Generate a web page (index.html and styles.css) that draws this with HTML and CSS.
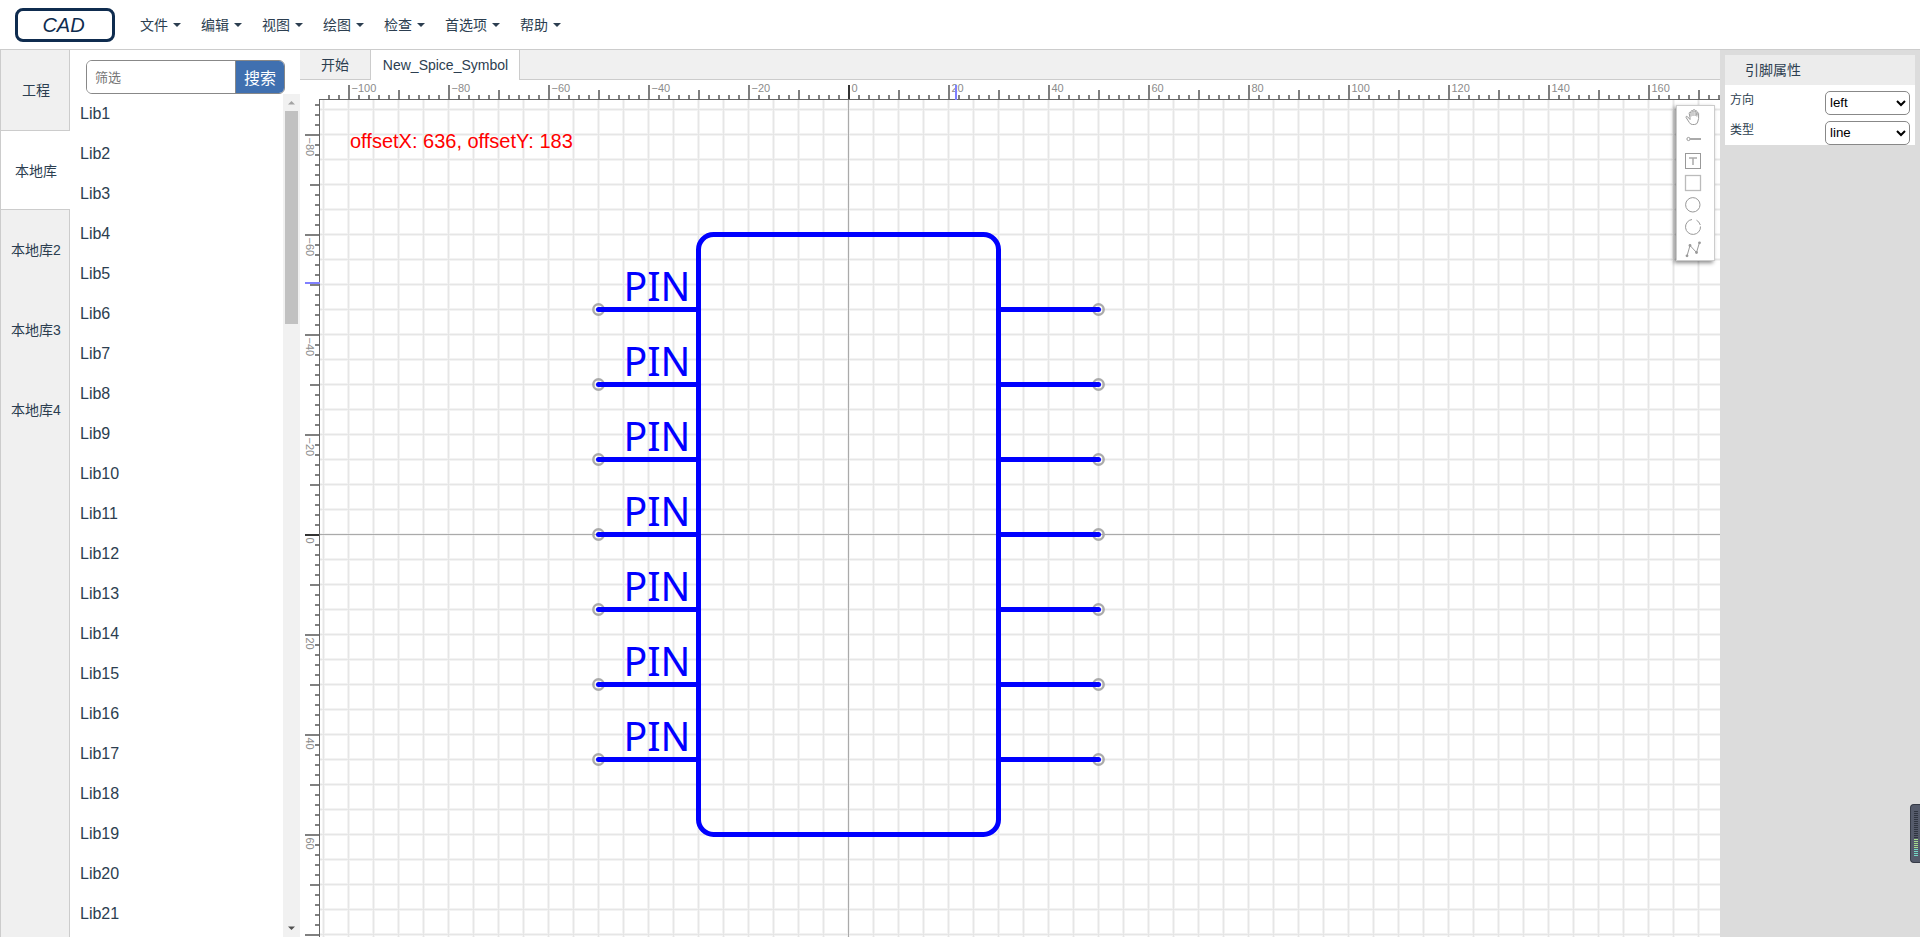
FILE: index.html
```html
<!DOCTYPE html>
<html lang="zh-CN">
<head>
<meta charset="utf-8">
<title>CAD</title>
<link rel="stylesheet" href="styles.css">
</head>
<body>
<header class="topbar">
  <div class="logo">CAD</div>
  <nav class="menu">
    <a class="menu-item">文件</a><a class="menu-item">编辑</a><a class="menu-item">视图</a><a class="menu-item">绘图</a><a class="menu-item">检查</a><a class="menu-item">首选项</a><a class="menu-item">帮助</a>
  </nav>
</header>
<main class="workspace">
  <nav class="side-tabs">
    <div class="side-tab first">工程</div>
    <div class="side-tab active">本地库</div>
    <div class="side-tab after">本地库2</div>
    <div class="side-tab">本地库3</div>
    <div class="side-tab">本地库4</div>
  </nav>
  <section class="library">
    <div class="search"><input class="search-input" placeholder="筛选"><button class="search-btn">搜索</button></div>
    <div class="lib-body">
      <div class="lib-list" id="libs"></div>
      <div class="scrollbar">
        <svg width="17" height="17" viewBox="0 0 17 17"><path d="M5 10.500L8.500 7L12 10.500Z" fill="#a3a3a3"/></svg>
        <div class="thumb"></div>
        <svg class="down" width="17" height="17" viewBox="0 0 17 17"><path d="M5 6.500L8.500 10L12 6.500Z" fill="#505050"/></svg>
      </div>
    </div>
  </section>
  <section class="editor">
    <div class="doc-tabs">
      <div class="doc-tab start">开始</div>
      <div class="doc-tab current">New_Spice_Symbol</div>
      <div class="doc-fill"></div>
    </div>
    <div class="stage">
      <svg class="canvas" id="canvas" width="1420" height="857" viewBox="300 80 1420 857"></svg>
      <div class="tools">
        <svg class="tool" viewBox="0 0 18 18"><path d="M6 11.500L3.600 8.800C2.600 7.800 1.500 8.600 2.200 9.700L5.400 14.600Q6.400 16.500 8.500 16.500H10.500Q13 16.500 13.700 14L14.600 10.500V5.500C14.600 4.300 13 4.300 12.900 5.500V8.500M12.900 7V3.500C12.900 2.300 11.100 2.300 11.100 3.500V8M11.100 4V2.500C11.100 1.300 9 1.300 9 2.500V8M9 3.500C9 2.300 7 2.300 7 3.500V8.500M7 5C6.700 3.900 5 4.100 5.200 5.400L6 9.500V11.500"/></svg>
        <svg class="tool" viewBox="0 0 18 18"><circle cx="4.500" cy="9" r="1.600"/><path d="M6 9H17" stroke-width="2" stroke="#aaa"/></svg>
        <svg class="tool" viewBox="0 0 18 18"><rect x="1.500" y="1.500" width="15" height="15"/><path d="M5 6H13M9 6V13" stroke="#aaa" stroke-width="1.500"/></svg>
        <svg class="tool" viewBox="0 0 18 18"><rect x="1.500" y="1.500" width="15" height="15" stroke="#bbb" stroke-width="1.300"/></svg>
        <svg class="tool" viewBox="0 0 18 18"><circle cx="8.800" cy="8.800" r="7.200"/></svg>
        <svg class="tool" viewBox="0 0 18 18"><path d="M12.500 2.200A7.500 7.500 0 0 1 16.300 7M16.500 8.500A7.500 7.500 0 1 1 8 1.500" /></svg>
        <svg class="tool" viewBox="0 0 18 18"><path d="M3 16L6 5.500L12.500 12.500L15.500 2.500"/><g fill="#999" stroke="none"><circle cx="3" cy="15.800" r="1.400"/><circle cx="6" cy="5.500" r="1.400"/><circle cx="12.500" cy="12.500" r="1.400"/><circle cx="15.500" cy="2.800" r="1.400"/></g></svg>
      </div>
    </div>
  </section>
  <aside class="props">
    <div class="prop-card">
      <div class="prop-title">引脚属性</div>
      <div class="prop-row"><span class="prop-name">方向</span><select class="prop-select"><option>left</option><option>right</option></select></div>
      <div class="prop-row"><span class="prop-name">类型</span><select class="prop-select"><option>line</option></select></div>
    </div>
    <div class="meter" id="meter"></div>
  </aside>
</main>
<script src="script.js"></script>
</body>
</html>
```
FILE: styles.css
```css
* { box-sizing: border-box; }
body {
  margin: 0;
  height: 937px;
  overflow: hidden;
  background: #fff;
  color: #2c3e50;
  font-family: "Liberation Sans", "Noto Sans CJK SC", sans-serif;
  font-size: 14px;
}
.topbar {
  height: 50px;
  padding-left: 15px;
  border-bottom: 1px solid #ccc;
  display: flex;
  align-items: center;
}
.logo {
  width: 100px;
  height: 34px;
  border: 3px solid #0f2c4f;
  border-radius: 8px;
  color: #0f2c4f;
  font-size: 20px;
  font-style: italic;
  line-height: 29px;
  padding-right: 3px;
  text-align: center;
}
.menu { display: flex; gap: 20px; margin-left: 25px; }
.menu-item { display: flex; align-items: center; line-height: 20px; }
.menu-item::after {
  content: "";
  margin-left: 5px;
  border: 4px solid transparent;
  border-top-color: #2c3e50;
  border-bottom: 0;
}
.workspace { display: flex; height: 887px; }
.side-tabs {
  width: 70px;
  background: #f0f0f0;
  border-left: 1px solid #ccc;
  display: flex;
  flex-direction: column;
}
.side-tab {
  height: 80px;
  border-right: 1px solid #ccc;
  display: flex;
  align-items: center;
  justify-content: center;
  padding: 0 0 2px 2px;
}
.side-tabs::after { content: ""; flex: 1; border-right: 1px solid #ccc; }
.side-tab.first { height: 81px; border-bottom: 1px solid #ccc; }
.side-tab.active { height: 78px; padding-bottom: 0; background: #fff; border-right-color: #fff; }
.side-tab.after { height: 81px; border-top: 1px solid #ccc; }
.library { width: 230px; display: flex; flex-direction: column; }
.search {
  width: 199px;
  height: 34px;
  margin: 10px 0 0 16px;
  border: 1px solid #888;
  border-radius: 6px;
  overflow: hidden;
  display: flex;
}
.search-input {
  width: 149px;
  padding: 0 8px;
  border: 0;
  border-right: 1px solid #888;
  font: 13px "Liberation Sans", "Noto Sans CJK SC", sans-serif;
}
.search-btn {
  flex: 1;
  padding: 0 0 1px;
  border: 0;
  background: #4070b0;
  color: #fff;
  font: 16px "Liberation Sans", "Noto Sans CJK SC", sans-serif;
}
.lib-body { flex: 1; min-height: 0; display: flex; }
.lib-list { flex: 1; overflow: hidden; font-size: 16px; }
.lib-item { height: 40px; line-height: 40px; padding-left: 10px; }
.scrollbar {
  width: 17px;
  background: #f1f1f1;
  display: flex;
  flex-direction: column;
}
.thumb { height: 213px; margin: 0 2px; background: #c1c1c1; }
.down { margin-top: auto; }
.editor { width: 1420px; display: flex; flex-direction: column; }
.doc-tabs { height: 30px; display: flex; line-height: 30px; }
.doc-tab { border-right: 1px solid #ccc; text-align: center; }
.start { width: 71px; background: #f0f0f0; border-bottom: 1px solid #ccc; }
.current { width: 149px; padding-left: 1px; }
.doc-fill { flex: 1; background: #f0f0f0; border-bottom: 1px solid #ccc; }
.stage { position: relative; height: 857px; }
.canvas { display: block; }
.tools {
  position: absolute;
  left: 1376px;
  top: 25px;
  width: 39px;
  height: 156px;
  padding: 2px 0 0 7px;
  background: #fff;
  border: 1px solid #ccc;
  box-shadow: -2px 2px 4px rgba(0, 0, 0, .45);
  display: flex;
  flex-direction: column;
  gap: 4px;
}
.tool { width: 18px; height: 18px; fill: none; stroke: #999; stroke-width: 1; }
.props { position: relative; width: 200px; padding: 5px; background: #dcdcdc; }
.prop-card { height: 90px; background: #fff; }
.prop-title { height: 30px; line-height: 30px; padding-left: 20px; background: #ececec; }
.prop-row {
  height: 30px;
  padding: 0 5px;
  display: flex;
  justify-content: space-between;
  align-items: flex-end;
  font-size: 12px;
}
.prop-name { align-self: flex-start; line-height: 31px; }
.prop-select {
  width: 85px;
  height: 24px;
  padding: 0 0 2px;
  border: 1px solid #888;
  border-radius: 5px;
  background: #fff;
  color: #000;
  font: 13.333px "Liberation Sans", sans-serif;
}
.meter {
  position: absolute;
  right: 0;
  top: 754px;
  width: 10px;
  height: 59px;
  padding: 6px 2px 0 3px;
  background: #555b6b;
  border: 1px solid #363b47;
  border-right: 0;
  border-radius: 4px 0 0 4px;
}
.bar { height: 1px; margin-bottom: 1px; background: #2f3440; }
.bar.on { background: #a5dc8e; }
.bar.cool { background: #74d8c4; }
.offset-text { font: 20px "Liberation Sans", sans-serif; fill: #f00; }
.pin-text { font: 40px "Noto Sans", sans-serif; fill: #00f; }
.tick-text { font: 11px "Liberation Sans", sans-serif; fill: #8c8c8c; }
```
FILE: script.js
```js
const OX = 848.5, OY = 534.5;
const LEFT = 320, TOP = 100, RIGHT = 1720, BOTTOM = 937;
const out = [];
const rect = (x, y, w, h, fill) => out.push(`<rect x="${x}" y="${y}" width="${w}" height="${h}" fill="${fill}"/>`);

// Grid: a soft band with a darker core, every 25 units
const xs = [], ys = [];
for (let x = OX - 21 * 25; x < RIGHT; x += 25) xs.push(x);
for (let y = OY - 17 * 25; y < BOTTOM; y += 25) ys.push(y);
xs.forEach(x => rect(x - 1.5, TOP, 3, BOTTOM - TOP, '#f3f3f3'));
ys.forEach(y => rect(LEFT, y - 1.5, RIGHT - LEFT, 3, '#f3f3f3'));
xs.forEach(x => rect(x - 0.5, TOP, 1, BOTTOM - TOP, '#e6e6e6'));
ys.forEach(y => rect(LEFT, y - 0.5, RIGHT - LEFT, 1, '#e6e6e6'));
rect(OX - 0.5, TOP, 1, BOTTOM - TOP, '#aaa');
rect(LEFT, OY - 0.5, RIGHT - LEFT, 1, '#aaa');

// Rulers
const tickLength = n => n % 10 === 0 ? 15 : n % 5 === 0 ? 10 : 5;
const label = n => String(n * 2).replace('-', '\u2212');
for (let n = -52; n <= 87; n++) {
  const x = OX + 0.5 + n * 10, len = tickLength(n);
  rect(x - 1, 100 - len, 2, len, n ? '#808080' : '#333');
  if (n % 10 === 0) out.push(`<text class="tick-text" x="${x + 2.5}" y="92">${label(n)}</text>`);
}
for (let n = -43; n <= 40; n++) {
  const y = OY + 0.5 + n * 10, len = tickLength(n);
  rect(320 - len, y - 1, len, 2, n ? '#808080' : '#333');
  if (n % 10 === 0 && n < 40) out.push(`<text class="tick-text" transform="translate(305.5 ${y + 2.5}) rotate(90)">${label(n)}</text>`);
}
rect(319, 99, 1401, 1, '#666');
rect(319, 99, 1, 838, '#666');
rect(955, 85, 2, 15, '#8080ff');
rect(305, 282, 15, 2, '#8080ff');

// Symbol
for (let i = 0; i < 7; i++) {
  const y = 309.5 + i * 75;
  [[598.5, 698.5], [1098.5, 998.5]].forEach(([a, b]) => {
    out.push(`<circle cx="${a}" cy="${y}" r="5.2" fill="none" stroke="#aaa" stroke-width="2.4"/>`);
    out.push(`<path d="M${a} ${y}H${b}" stroke="#00f" stroke-width="5" stroke-linecap="round"/>`);
  });
  out.push(`<text class="pin-text" x="623.5" y="${y - 9}" textLength="67" lengthAdjust="spacingAndGlyphs">PIN</text>`);
}
out.push('<rect x="698.5" y="234.5" width="300" height="600" rx="15" fill="none" stroke="#00f" stroke-width="5"/>');
out.push('<text class="offset-text" x="350" y="148">offsetX: 636, offsetY: 183</text>');
document.getElementById('canvas').innerHTML = out.join('');

document.getElementById('libs').innerHTML =
  Array.from({ length: 21 }, (_, i) => `<div class="lib-item">Lib${i + 1}</div>`).join('');

document.getElementById('meter').innerHTML =
  Array.from({ length: 23 }, (_, i) => `<div class="bar${i > 18 ? ' cool' : i > 13 ? ' on' : ''}"></div>`).join('');
```
